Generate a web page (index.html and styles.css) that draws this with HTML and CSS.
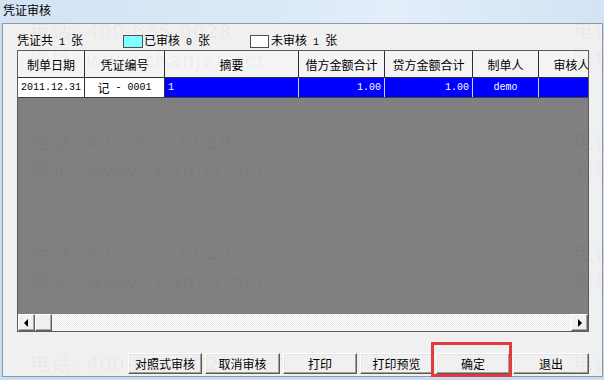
FILE: index.html
```html
<!DOCTYPE html>
<html lang="zh-CN">
<head>
<meta charset="utf-8">
<title>凭证审核</title>
<link rel="stylesheet" href="styles.css">
</head>
<body>
<div class="window">
  <div class="titlebar">凭证审核</div>
  <div class="panel">
    <div class="summary">
      <span class="label">凭证共<span class="n"> 1 </span>张</span>
      <span class="legend"><span class="swatch done"></span><span class="label">已审核<span class="n"> 0 </span>张</span></span>
      <span class="legend"><span class="swatch todo"></span><span class="label">未审核<span class="n"> 1 </span>张</span></span>
    </div>
    <div class="grid">
      <div class="viewport">
        <div class="row head">
          <div class="cell c1">制单日期</div>
          <div class="cell c2">凭证编号</div>
          <div class="cell c3">摘要</div>
          <div class="cell c4">借方金额合计</div>
          <div class="cell c5">贷方金额合计</div>
          <div class="cell c6">制单人</div>
          <div class="cell c7">审核人</div>
        </div>
        <div class="row data">
          <div class="cell c1 plain left"><span class="n">2011.12.31</span></div>
          <div class="cell c2 plain">记<span class="n"> - 0001</span></div>
          <div class="cell c3 sel left"><span class="n">1</span></div>
          <div class="cell c4 sel right"><span class="n">1.00</span></div>
          <div class="cell c5 sel right"><span class="n">1.00</span></div>
          <div class="cell c6 sel"><span class="n">demo</span></div>
          <div class="cell c7 sel"></div>
        </div>
      </div>
      <div class="hscroll">
        <div class="sbtn"><span class="arrow-left"></span></div>
        <div class="sbtn"></div>
        <div class="track"></div>
        <div class="sbtn"><span class="arrow-right"></span></div>
      </div>
    </div>
    <div class="buttons">
      <div class="btn w74">对照式审核</div>
      <div class="btn w75">取消审核</div>
      <div class="btn w74">打印</div>
      <div class="btn w73">打印预览</div>
      <div class="btn w74">确定</div>
      <div class="btn w76">退出</div>
    </div>
  </div>
  <div class="highlight"></div>
  <div class="watermark">
    <div class="wm">电话: 400-665-0028<br>网址: www.chanjet.net</div>
    <div class="wm">电话: 400-665-0028<br>网址: www.chanjet.net</div>
    <div class="wm">电话: 400-665-0028<br>网址: www.chanjet.net</div>
    <div class="wm">电话: 400-665-0028<br>网址: www.chanjet.net</div>
    <div class="wm">电话: 400-665-0028<br>网址: www.chanjet.net</div>
    <div class="wm">电话: 400-665-0028<br>网址: www.chanjet.net</div>
    <div class="wm">电话: 400-665-0028<br>网址: www.chanjet.net</div>
    <div class="wm">电话: 400-665-0028<br>网址: www.chanjet.net</div>
  </div>
</div>
</body>
</html>
```
FILE: styles.css
```css
* { box-sizing: border-box; }
html, body { margin: 0; padding: 0; }
body {
  width: 604px;
  height: 380px;
  overflow: hidden;
  font-family: "Noto Sans CJK SC", "Noto Sans", sans-serif;
  font-size: 12px;
  color: #000;
}
.window {
  position: relative;
  width: 604px;
  height: 380px;
  overflow: hidden;
  background: #c9dcf0;
}
.titlebar {
  height: 23px;
  padding-left: 3px;
  line-height: 20px;
  background: linear-gradient(to right, #d3e3f4 0%, #dbe9f7 45%, #e3eef9 65%, #d2e3f4 100%);
}
.panel {
  margin-left: 2px;
  width: 601px;
  height: 354px;
  border: 1px solid #8d99a8;
  background: #f0f0f0;
}
.n {
  font-family: "Liberation Mono", monospace;
  font-size: 10px;
}
.summary {
  height: 26px;
  padding: 9px 0 0 14px;
  line-height: 16px;
  display: flex;
  align-items: center;
}
.summary .label { white-space: pre; }
.legend {
  display: flex;
  align-items: center;
  margin-left: 40px;
}
.swatch {
  width: 20px;
  height: 13px;
  border: 1px solid #505050;
  margin-right: 1px;
}
.swatch.done { background: #80ffff; }
.swatch.todo { background: #ffffff; width: 19px; margin-right: 2px; }
.grid {
  margin-left: 14px;
  width: 572px;
  height: 282px;
  border: 1px solid #5c5c5c;
  display: flex;
  flex-direction: column;
}
.viewport {
  height: 263px;
  background: #808080;
  overflow: hidden;
}
.row {
  display: flex;
  width: 600px;
}
.row.head {
  height: 27px;
  border-bottom: 1px solid #303030;
  background: #f4f4f4;
}
.row.data {
  height: 20px;
  border-bottom: 1px solid #404040;
}
.cell {
  flex: none;
  border-right: 1px solid #303030;
  display: flex;
  align-items: center;
  justify-content: center;
  white-space: pre;
  overflow: hidden;
}
.c1 { width: 67px; }
.c2 { width: 80px; }
.c3 { width: 134px; }
.c4 { width: 86px; }
.c5 { width: 88px; }
.c6 { width: 66px; }
.c7 { width: 66px; }
.plain { background: #fff; }
.sel {
  background: #0000ff;
  color: #fff;
  border-right-color: #d0d0e8;
}
.left { justify-content: flex-start; padding-left: 3px; }
.right { justify-content: flex-end; padding-right: 3px; }
.hscroll {
  height: 17px;
  display: flex;
}
.sbtn {
  width: 17px;
  height: 17px;
  background: #f0f0f0;
  border: 1px solid;
  border-color: #ffffff #606060 #606060 #ffffff;
  box-shadow: inset -1px -1px 0 #a8a8a8;
  display: flex;
  align-items: center;
  justify-content: center;
}
.track {
  flex: 1;
  background: repeating-conic-gradient(#ffffff 0 25%, #e8e8e8 0 50%) 0 0 / 2px 2px;
}
.arrow-left {
  width: 0; height: 0;
  border-top: 4px solid transparent;
  border-bottom: 4px solid transparent;
  border-right: 4px solid #000;
  margin-right: 1px;
}
.arrow-right {
  width: 0; height: 0;
  border-top: 4px solid transparent;
  border-bottom: 4px solid transparent;
  border-left: 4px solid #000;
  margin-left: 1px;
}
.buttons {
  margin-top: 21px;
  padding-right: 13px;
  display: flex;
  justify-content: flex-end;
  gap: 3px;
}
.btn {
  height: 21px;
  background: #f0f0f0;
  border: 1px solid;
  border-color: #ffffff #5a5a5a #5a5a5a #ffffff;
  box-shadow: inset -1px -1px 0 #a0a0a0, inset 1px 1px 0 #e4e4e4;
  display: flex;
  align-items: center;
  justify-content: center;
  line-height: 1;
}
.w73 { width: 73px; }
.w74 { width: 74px; }
.w75 { width: 75px; }
.w76 { width: 76px; }
.highlight {
  position: absolute;
  left: 431px;
  top: 342px;
  width: 81px;
  height: 35px;
  border: 3px solid #e5393d;
}
.watermark {
  position: absolute;
  inset: 0;
  pointer-events: none;
  padding: 16px 0 0 30px;
  display: grid;
  grid-template-columns: 543px 543px;
  grid-auto-rows: 111px;
  font-family: "Noto Sans", "Noto Sans CJK SC", sans-serif;
  font-size: 20px;
  line-height: 29px;
  letter-spacing: 1.5px;
  color: rgba(0, 0, 0, 0.045);
  white-space: nowrap;
}
```
